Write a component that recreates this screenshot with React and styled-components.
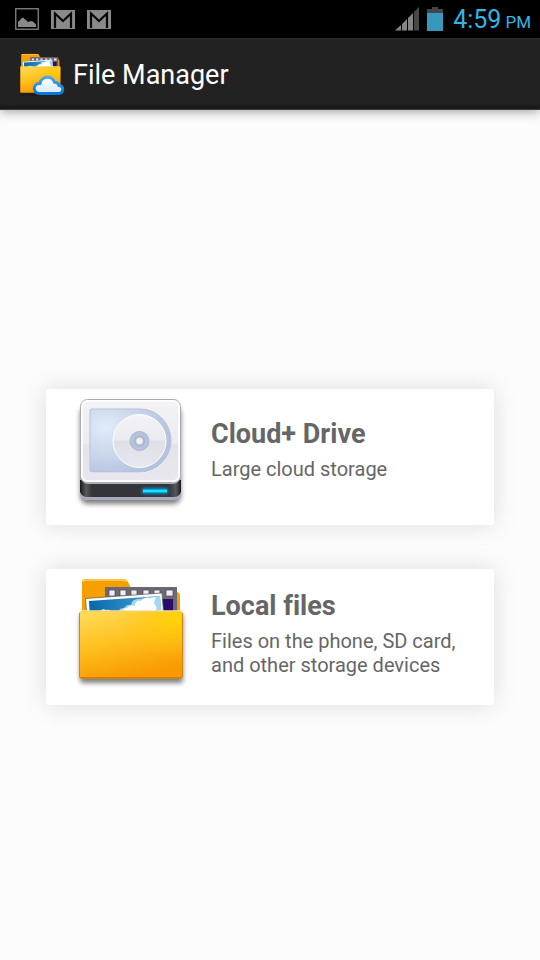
import React from 'react'
import styled, { createGlobalStyle } from 'styled-components'

const GlobalStyle = createGlobalStyle`
	* {
		box-sizing: border-box;
	}

	body {
		margin: 0;
		background: #fcfcfc;
		font-family: Roboto, sans-serif;
	}
`

const Screen = styled.div`
	min-height: 100vh;
	display: flex;
	flex-direction: column;
`

const StatusBar = styled.div`
	height: 38px;
	padding: 0 9px 0 15px;
	display: flex;
	align-items: center;
	justify-content: space-between;
	background: #000;
`

const StatusGroup = styled.div`
	display: flex;
	align-items: center;
	gap: ${props => props.gap};
`

const Clock = styled.time`
	padding: 3px 0 0 2px;
	display: flex;
	align-items: baseline;
	gap: 4px;
	color: #33b5e5;
	font-size: 25px;
	line-height: 35px;
	white-space: nowrap;
`

const Meridiem = styled.span`
	font-size: 17px;
`

const ActionBar = styled.header`
	height: 72px;
	padding: 2px 20px 0;
	display: flex;
	align-items: center;
	gap: 8px;
	background: linear-gradient(#303030 0, #222 2px, #222 66px, #1a1a1a 68px, #1a1a1a 71px, #555 72px);
	box-shadow: 0 2px 10px rgba(0, 0, 0, 0.35);
`

const AppTitle = styled.h1`
	margin: 0;
	color: #fff;
	font-size: 27px;
	font-weight: 400;
	line-height: 32px;
`

const Main = styled.main`
	flex: 1;
	padding: 24px 46px 0;
	display: flex;
	flex-direction: column;
	justify-content: center;
	gap: 44px;
`

const Card = styled.button`
	width: 100%;
	padding: 0 24px 10px;
	display: flex;
	align-items: center;
	gap: 11px;
	border: 0;
	border-radius: 3px;
	background: #fff;
	box-shadow: 0 0 24px rgba(0, 0, 0, 0.13);
	color: #666;
	font-family: inherit;
	font-variant-ligatures: none;
	text-align: left;
	cursor: pointer;
`

const CardIcon = styled.svg`
	flex: none;
	width: 130px;
	height: 126px;
`

const CardText = styled.span`
	flex: 1;
	padding-top: 2px;
	display: flex;
	flex-direction: column;
	gap: 7px;
	white-space: nowrap;
`

const CardTitle = styled.strong`
	font-size: 27px;
	font-weight: 700;
	line-height: 32px;
`

const CardDescription = styled.span`
	min-height: 32px;
	font-size: 20px;
	line-height: 24px;
	white-space: pre-line;
`

const PictureIcon = () => (
	<svg width='24' height='22' viewBox='0 0 24 22' aria-hidden='true'>
		<rect x='0.75' y='0.75' width='22.5' height='20.5' fill='none' stroke='#858585' strokeWidth='1.3'/>
		<path d='M3 19v-5l4-4 1-.5 4 3.5 1 1 3-1 2 .5 3 3V19z' fill='#8a8a8a'/>
	</svg>
)

const MailIcon = () => (
	<svg width='24' height='19' viewBox='0 0 24 19' aria-hidden='true'>
		<rect width='24' height='19' fill='#8a8a8a'/>
		<path d='M4 18V3.5l8 7.500 8-7.500V18' fill='none' stroke='#080808' strokeWidth='2.2'/>
	</svg>
)

const SignalIcon = () => (
	<svg width='24' height='24' viewBox='0 0 24 24' aria-hidden='true'>
		<path d='M0 23.5L6 18v5.5zM7 17l5-5v11.5H7zM13 11l5-5v17.5h-5z' fill='#858585'/>
		<path d='M19 5l5-5v23.5h-5z' fill='#484848'/>
	</svg>
)

const BatteryIcon = () => (
	<svg width='16' height='24' viewBox='0 0 16 24' aria-hidden='true'>
		<path d='M0 2h5V0h6v2h5v5H0z' fill='#454545'/>
		<rect y='6' width='16' height='18' fill='#3798bd'/>
	</svg>
)

const DriveIcon = () => (
	<CardIcon viewBox='0 -1 130 126' aria-hidden='true'>
		<defs>
			<linearGradient id='driveTop' x2='0' y2='1'>
				<stop offset='0' stopColor='#f3f3f5'/>
				<stop offset='0.53' stopColor='#ececef'/>
				<stop offset='0.54' stopColor='#e3e3e9'/>
				<stop offset='1' stopColor='#e7e7ed'/>
			</linearGradient>
			<linearGradient id='driveBase'>
				<stop offset='0' stopColor='#17181a'/>
				<stop offset='0.06' stopColor='#57585c'/>
				<stop offset='0.12' stopColor='#343539'/>
				<stop offset='0.88' stopColor='#343539'/>
				<stop offset='0.95' stopColor='#57585c'/>
				<stop offset='1' stopColor='#17181a'/>
			</linearGradient>
			<radialGradient id='driveWindow' cx='0.2' cy='0.3' r='0.8'>
				<stop offset='0' stopColor='#e1ecf9'/>
				<stop offset='0.5' stopColor='#cbd8ec'/>
				<stop offset='1' stopColor='#b4c2de'/>
			</radialGradient>
			<linearGradient id='driveDisc' x2='0' y2='1'>
				<stop offset='0' stopColor='#f4f4f7'/>
				<stop offset='0.48' stopColor='#eaeaf0'/>
				<stop offset='0.5' stopColor='#dfdfe8'/>
				<stop offset='1' stopColor='#e7e7ee'/>
			</linearGradient>
			<filter id='driveBlur' x='-20%' y='-20%' width='140%' height='140%'>
				<feGaussianBlur stdDeviation='2.5'/>
			</filter>
			<filter id='ledBlur' x='-30%' y='-100%' width='160%' height='300%'>
				<feGaussianBlur stdDeviation='1.5'/>
			</filter>
		</defs>
		<rect x='10' y='16' width='101' height='98' rx='8' fill='#000' opacity='0.5' filter='url(#driveBlur)'/>
		<rect x='10' y='78' width='101' height='32' rx='6' fill='#a9aabb'/>
		<path d='M10 90h101v12q-2 5-7 5H17q-5 0-7-5z' fill='url(#driveBase)'/>
		<path d='M10 86q2 8 8 8h85q6 0 8-8v-4H10z' fill='#acacba'/>
		<rect x='10.5' y='9.5' width='100' height='83' rx='7' fill='#fff' stroke='#aaaab2'/>
		<rect x='12' y='11' width='97' height='80' rx='6' fill='url(#driveTop)' stroke='#fff' strokeWidth='1.5'/>
		<path d='M22 19h48a31.5 32 0 0 1 0 64H22q-2 0-2-2V21q0-2 2-2z' fill='#fafafd'/>
		<path d='M22 19h48a31 31.5 0 0 1 0 63H22q-2 0-2-2V21q0-2 2-2z' fill='url(#driveWindow)' stroke='#b5c1da' strokeWidth='1'/>
		<circle cx='69.5' cy='51' r='26.5' fill='url(#driveDisc)' stroke='#fff' strokeWidth='1'/>
		<circle cx='69.5' cy='51' r='9.5' fill='#b8c3db' stroke='#a9b6d4'/>
		<circle cx='69.5' cy='51' r='5.5' fill='#a8b5d2'/>
		<circle cx='69.5' cy='51' r='3.5' fill='#f2f2f3' stroke='#c9c9c9' strokeWidth='0.5'/>
		<rect x='72' y='98' width='26' height='6' rx='2' fill='#00a9da' opacity='0.8' filter='url(#ledBlur)'/>
		<rect x='73' y='99' width='24' height='4' fill='#00a5ea'/>
		<rect x='73' y='100' width='24' height='2' fill='#17e2ff'/>
	</CardIcon>
)

const FolderShapes = ({ id }) => (
	<>
		<defs>
			<linearGradient id={`${id}Front`} x1='0.1' x2='0.4' y2='1'>
				<stop offset='0' stopColor='#ffda58'/>
				<stop offset='0.45' stopColor='#ffc323'/>
				<stop offset='1' stopColor='#f99a00'/>
			</linearGradient>
			<radialGradient id={`${id}Shine`} cx='0.95' cy='0.1' r='0.6'>
				<stop offset='0' stopColor='#ffd500' stopOpacity='0.8'/>
				<stop offset='1' stopColor='#ffc000' stopOpacity='0'/>
			</radialGradient>
			<linearGradient id={`${id}Sky`}>
				<stop offset='0' stopColor='#0868a8'/>
				<stop offset='1' stopColor='#4ba5dc'/>
			</linearGradient>
			<filter id={`${id}Blur`} x='-20%' y='-20%' width='140%' height='140%'>
				<feGaussianBlur stdDeviation='2.5'/>
			</filter>
		</defs>
		<rect x='10' y='44' width='103' height='69' rx='3' fill='#000' opacity='0.5' filter={`url(#${id}Blur)`}/>
		<path d='M12 12q0-3 3-3h39q3 0 4 3l5 10h43q4 0 4 4v24H12z' fill='#f5a000'/>
		<path d='M13 12q0-2 3-2h37q3 0 4 2' fill='none' stroke='#ffcf61' strokeWidth='1.5'/>
		<path d='M35 17h72v35H35z' fill='#6d6875'/>
		<path d='M85 29h18v20H85z' fill='#290d68'/>
		<path d='M39 20h6v6h-6zM50 20h6v6h-6zM61 20h6v6h-6zM73 20h6v6h-6zM84 20h6v6h-6zM96 20h7v6h-7z' fill='#eee' stroke='#4b4653' strokeWidth='0.7'/>
		<path d='M15.5 28.5L92 23l2 25H17z' fill='#fff' stroke='#555' strokeWidth='0.7'/>
		<path d='M19 31l71-5 2 24H20z' fill={`url(#${id}Sky)`}/>
		<path d='M49 42q0-4 5-4 3-4 7-3 1-6 7-6l22-3 2 24H49z' fill='#a5d6f0'/>
		<path d='M53 42q-1-4 4-4 3-4 8-2 0-6 6-5 4-5 9-3l6-1-2 6 3 5-3 4z' fill='#fff'/>
		<path d='M29 42q3-4 7-2 4-1 6 2z' fill='#f0faff'/>
		<rect x='9.5' y='41.5' width='103' height='67' rx='2.5' fill={`url(#${id}Front)`}/>
		<rect x='9.5' y='41.5' width='103' height='67' rx='2.5' fill={`url(#${id}Shine)`} stroke='#cf8310'/>
		<path d='M10 43q0-2 2-2h98q2 0 2 2' fill='none' stroke='#ffe690' strokeWidth='1.5'/>
		<path d='M11 107.5h100' stroke='#d37b08'/>
	</>
)

const FolderIcon = () => (
	<CardIcon viewBox='0 -1 130 126' aria-hidden='true'>
		<FolderShapes id='local'/>
	</CardIcon>
)

const AppIcon = () => (
	<svg width='45' height='44' viewBox='0 0 45 44' aria-hidden='true'>
		<defs>
			<linearGradient id='cloudEdge' x2='0' y2='1'>
				<stop offset='0' stopColor='#49a5f3'/>
				<stop offset='1' stopColor='#0875dc'/>
			</linearGradient>
			<linearGradient id='cloudFill' x2='0' y2='1'>
				<stop offset='0' stopColor='#fff'/>
				<stop offset='1' stopColor='#d6e9f9'/>
			</linearGradient>
		</defs>
		<g transform='translate(-3.5 -2.5) scale(0.39)'>
			<FolderShapes id='app'/>
		</g>
		<path
			d='M19.5 40.5a5 5 0 0 1-.5-10q.5 0 1 .2a7.500 7.500 0 0 1 14.500-1.500 4.500 4.500 0 0 1 4.500 3.300 4 4 0 0 1-.5 8z'
			fill='url(#cloudFill)'
			stroke='url(#cloudEdge)'
			strokeWidth='3'
			strokeLinejoin='round'
		/>
	</svg>
)

const locations = [
	{
		title: 'Cloud+ Drive',
		description: 'Large cloud storage',
		Icon: DriveIcon
	},
	{
		title: 'Local files',
		description: 'Files on the phone, SD card,\nand other storage devices',
		Icon: FolderIcon
	}
]

export default () => (
	<Screen>
		<GlobalStyle/>
		<StatusBar>
			<StatusGroup gap='12px'>
				<PictureIcon/>
				<MailIcon/>
				<MailIcon/>
			</StatusGroup>
			<StatusGroup gap='8px'>
				<SignalIcon/>
				<BatteryIcon/>
				<Clock>4:59<Meridiem>PM</Meridiem></Clock>
			</StatusGroup>
		</StatusBar>
		<ActionBar>
			<AppIcon/>
			<AppTitle>File Manager</AppTitle>
		</ActionBar>
		<Main>
			{
				locations.map(({ title, description, Icon }) => (
					<Card key={title} type='button'>
						<Icon/>
						<CardText>
							<CardTitle>{title}</CardTitle>
							<CardDescription>{description}</CardDescription>
						</CardText>
					</Card>
				))
			}
		</Main>
	</Screen>
)
